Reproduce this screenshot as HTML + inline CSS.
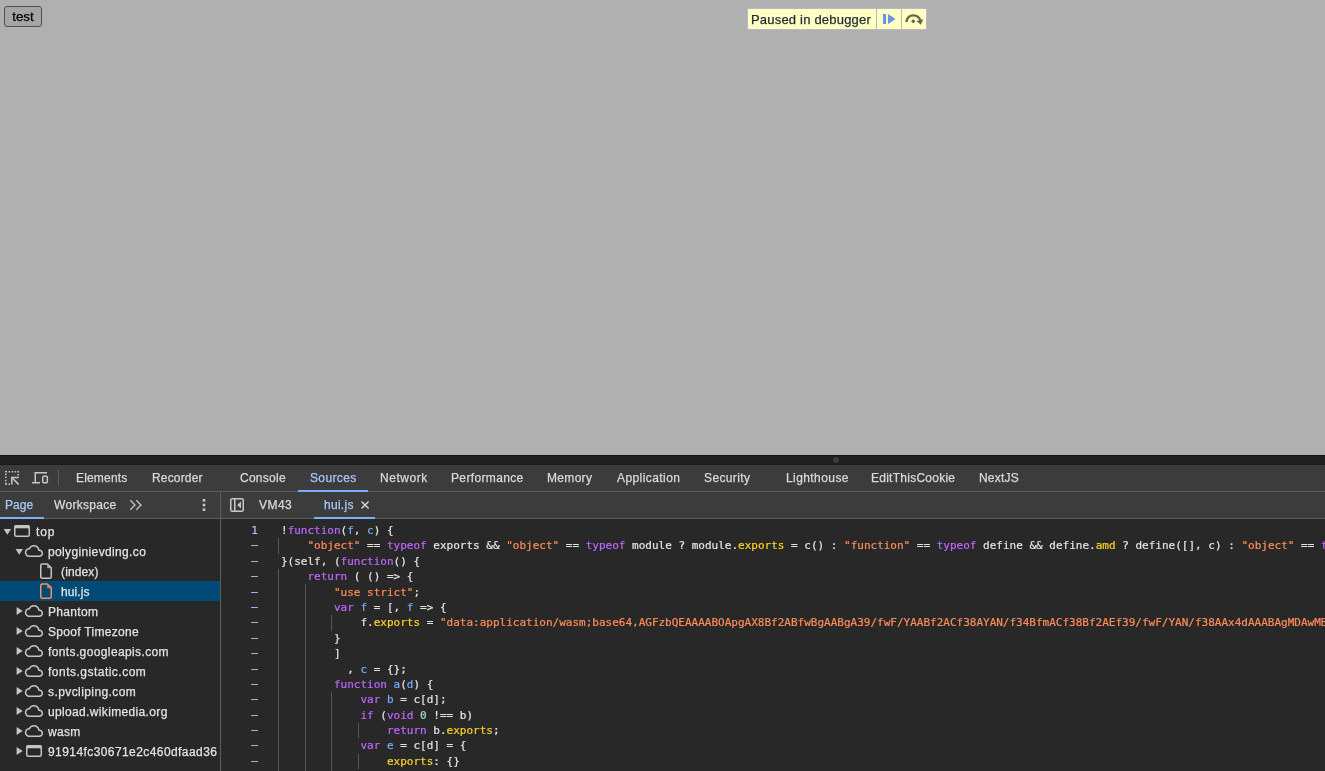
<!DOCTYPE html>
<html lang="en"><head><meta charset="utf-8"><title>test</title>
<style>

html,body{margin:0;padding:0}
body{width:1325px;height:771px;overflow:hidden;background:#b0b0b0;position:relative;font-family:"Liberation Sans", "DejaVu Sans", sans-serif;}
.abs{position:absolute}
.lab,#code,#gut,#btn,#paused .t{will-change:transform}
#code,#gut{-webkit-text-stroke:0.2px}
.lab,#paused .t{-webkit-text-stroke:0.25px}
.lab{position:absolute;height:20px;line-height:20px;white-space:nowrap;font-family:"Liberation Sans", "DejaVu Sans", sans-serif;}
#btn{position:absolute;left:4px;top:6px;width:38px;height:21px;box-sizing:border-box;border:1px solid #505050;border-radius:3px;-webkit-text-stroke:0.25px;background:#a5a5a5;color:#000;font:13.33px "Liberation Sans", "DejaVu Sans", sans-serif;line-height:19px;text-align:center}
#paused{position:absolute;left:747px;top:8px;width:180px;height:22px;box-sizing:border-box;background:#ffffc2;border:1px solid #b9b9cc;}
#paused .t{position:absolute;left:3px;top:1px;letter-spacing:0.2px;height:20px;line-height:20px;font-size:13px;color:#1f2a3a;white-space:nowrap}
#paused .sep{position:absolute;top:0;width:1px;height:20px;background:#b9b9cc}
#strip{position:absolute;left:0;top:455px;width:1325px;height:10px;background:#202020;border-top:1px solid #131313;border-bottom:1px solid #1a1a1a;box-sizing:border-box}
#dot{position:absolute;left:833.3px;top:457px;width:6px;height:6px;border-radius:50%;background:#3b3b3b}
#bar1{position:absolute;left:0;top:465px;width:1325px;height:26px;background:#3c3c3c}
#bar1b{position:absolute;left:0;top:491px;width:1325px;height:1px;background:#5c5c5c}
#bar2{position:absolute;left:0;top:492px;width:1325px;height:26px;background:#3c3c3c}
#bar2b{position:absolute;left:0;top:518px;width:1325px;height:1px;background:#5c5c5c}
#main{position:absolute;left:0;top:519px;width:1325px;height:252px;background:#282828;overflow:hidden}
#vsep{position:absolute;left:220px;top:492px;width:1px;height:279px;background:#5c5c5c}
.ul{position:absolute;height:2px;background:#7cb0ff}
#sel{position:absolute;left:0;top:581px;width:220px;height:20px;background:#004a77}
svg{position:absolute;overflow:visible}
#code{position:absolute;left:281px;top:0;white-space:pre;font-family:"DejaVu Sans Mono", "Liberation Mono", monospace;font-size:11px;line-height:15.4px;color:#e3e3e3;}
#code div{height:15.4px}
#gut{position:absolute;left:221px;top:0;width:36.8px;text-align:right;white-space:pre;font-family:"DejaVu Sans Mono", "Liberation Mono", monospace;font-size:11px;line-height:15.4px;color:#a8c7fa}
#gut div{height:15.4px}
#gut .da{position:relative;top:-1px}
.k{color:#bf67ff}.s{color:#fe8d59}.p{color:#fcd224}.d{color:#7cacf8}.n{color:#a8dab5}
.g{position:absolute;width:1px;background:#565656}
#codewrap{position:absolute;left:0;top:3.8px;width:1325px;height:260px}

</style></head><body>
<div id="btn">test</div>
<div id="paused"><span class="t" id="pausedt">Paused in debugger</span><span class="sep" style="left:128px"></span><span class="sep" style="left:153px"></span><svg style="left:-1px;top:-1px" width="180" height="22" viewBox="747 8 180 22"><rect x="883" y="14" width="3" height="10" fill="#6495ed"/><path d="M888 14 L895.6 19 L888 24 Z" fill="#6495ed"/><path d="M906.4 22.2 C907 17.6 910 15.4 913.3 15.4 C916.8 15.4 919.5 17.5 920.5 20.8" fill="none" stroke="#66664d" stroke-width="2.2"/><path d="M916.4 20.9 L923.1 19.3 L920.9 24.8 Z" fill="#66664d"/><circle cx="913.2" cy="21.2" r="1.7" fill="#66664d"/></svg></div>
<div id="strip"></div><div id="dot"></div>
<div id="bar1"></div><div id="bar1b"></div><div id="bar2"></div><div id="bar2b"></div>
<div id="main"></div>
<svg style="left:0;top:465px" width="70" height="26" viewBox="0 465 70 26">
<g fill="none" stroke="#c7c7c7" stroke-width="1.5">
<path d="M5.75 484.2 V471.75 H18.2" stroke-dasharray="1.5 1.55"/>
<path d="M18.25 471 V475.5" stroke-dasharray="1.5 1.5"/>
<path d="M5 484.25 H10" stroke-dasharray="1.5 1.5" stroke-dashoffset="-0.5"/>
<path d="M11.8 484.5 V477.6 H18.8"/>
<path d="M12.2 478 L18.6 484.4"/>
</g>
<g fill="none" stroke="#c7c7c7" stroke-width="1.5">
<path d="M47 472.75 H35.25 V482"/>
<path d="M32 482.75 H40"/>
<rect x="42.75" y="476.25" width="4.6" height="6.5" rx="1"/>
</g>
<rect x="58" y="470" width="1" height="16" fill="#5c5c5c"/>
</svg>
<span class="lab" id="t_el" style="left:76px;top:468px;color:#dadada;font-size:12px;letter-spacing:0.174px;">Elements</span>
<span class="lab" id="t_rec" style="left:152px;top:468px;color:#dadada;font-size:12px;letter-spacing:0.168px;">Recorder</span>
<span class="lab" id="t_con" style="left:240px;top:468px;color:#dadada;font-size:12px;letter-spacing:0.266px;">Console</span>
<span class="lab" id="t_src" style="left:310px;top:468px;color:#a8c7fa;font-size:12px;letter-spacing:0.365px;">Sources</span>
<span class="lab" id="t_net" style="left:380px;top:468px;color:#dadada;font-size:12px;letter-spacing:0.536px;">Network</span>
<span class="lab" id="t_perf" style="left:451px;top:468px;color:#dadada;font-size:12px;letter-spacing:0.36px;">Performance</span>
<span class="lab" id="t_mem" style="left:547px;top:468px;color:#dadada;font-size:12px;letter-spacing:0.32px;">Memory</span>
<span class="lab" id="t_app" style="left:617px;top:468px;color:#dadada;font-size:12px;letter-spacing:0.42px;">Application</span>
<span class="lab" id="t_sec" style="left:704px;top:468px;color:#dadada;font-size:12px;letter-spacing:0.372px;">Security</span>
<span class="lab" id="t_lh" style="left:786px;top:468px;color:#dadada;font-size:12px;letter-spacing:0.418px;">Lighthouse</span>
<span class="lab" id="t_etc" style="left:871px;top:468px;color:#dadada;font-size:12px;letter-spacing:0.257px;">EditThisCookie</span>
<span class="lab" id="t_nx" style="left:979px;top:468px;color:#dadada;font-size:12px;letter-spacing:0.2px;">NextJS</span>
<div class="ul" style="left:298px;top:490px;width:70px"></div>
<span class="lab" id="s_page" style="left:5px;top:495px;color:#a8c7fa;font-size:12px;letter-spacing:0.07px;">Page</span>
<span class="lab" id="s_ws" style="left:54px;top:495px;color:#dadada;font-size:12px;letter-spacing:0.3px;">Workspace</span>
<div class="ul" style="left:0;top:517px;width:44px"></div>
<svg style="left:120px;top:492px" width="130" height="26" viewBox="120 492 130 26">
<g fill="none" stroke="#c7c7c7" stroke-width="1.3">
<path d="M130.3 500.3 L135 505 L130.3 509.7"/><path d="M136.3 500.3 L141 505 L136.3 509.7"/>
<rect x="230.75" y="498.75" width="12.5" height="12.5" rx="1.6" stroke-width="1.5"/>
<path d="M234.75 499 V511" stroke-width="1.5"/>
</g>
<path d="M241 501.6 V508.6 L237.2 505.1 Z" fill="#c7c7c7"/>
<rect x="202.7" y="499" width="2.6" height="2.6" fill="#c7c7c7"/><rect x="202.7" y="503.7" width="2.6" height="2.6" fill="#c7c7c7"/><rect x="202.7" y="508.4" width="2.6" height="2.6" fill="#c7c7c7"/>
</svg>
<span class="lab" id="f_vm" style="left:259px;top:495px;color:#dadada;font-size:12px;letter-spacing:0.469px;">VM43</span>
<span class="lab" id="f_hui" style="left:324px;top:495px;color:#a8c7fa;font-size:12px;letter-spacing:0.28px;">hui.js</span>
<svg style="left:358px;top:498px" width="14" height="14" viewBox="358 498 14 14"><path d="M361.5 501.5 L368.6 508.6 M368.6 501.5 L361.5 508.6" stroke="#dadada" stroke-width="1.4" fill="none"/></svg>
<div class="ul" style="left:314px;top:517px;width:61px"></div>
<div id="sel"></div>
<svg style="left:0;top:519px" width="220" height="252" viewBox="0 519 220 252"><path d="M3.6 528.9 h7.5 l-3.75 5.9 Z" fill="#c4c4c4"/><rect x="14.75" y="525.75" width="14.5" height="10.5" rx="1.5" fill="none" stroke="#c4c4c4" stroke-width="1.5"/><rect x="14.5" y="525.4" width="15" height="2.9" fill="#c4c4c4"/><path d="M15.5 548.9 h7.5 l-3.75 5.9 Z" fill="#c4c4c4"/><path transform="translate(24.8 541.85) scale(0.7625)" d="M12 6c2.62 0 4.88 1.86 5.39 4.43l.3 1.5 1.53.11c1.56.1 2.78 1.41 2.78 2.96 0 1.65-1.35 3-3 3H6c-2.21 0-4-1.79-4-4 0-2.05 1.53-3.76 3.56-3.97l1.07-.11.5-.95C8.08 7.14 9.94 6 12 6m0-2C9.11 4 6.6 5.64 5.35 8.04 2.34 8.36 0 10.91 0 14c0 3.31 2.69 6 6 6h13c2.76 0 5-2.24 5-5 0-2.64-2.05-4.78-4.65-4.96C18.67 6.59 15.64 4 12 4z" fill="#c4c4c4"/><path d="M42.25 563.95 H47.35 L51.25 567.85 V576.6500000000001 a1.5 1.5 0 0 1 -1.5 1.5 H42.25 a1.5 1.5 0 0 1 -1.5 -1.5 V565.45 a1.5 1.5 0 0 1 1.5 -1.5 Z" fill="none" stroke="#c4c4c4" stroke-width="1.5" stroke-linejoin="round"/><path d="M47.15 564.1500000000001 V568.1500000000001 H51.15 Z" fill="#c4c4c4" opacity="0.75"/><path d="M42.25 583.95 H47.35 L51.25 587.85 V596.6500000000001 a1.5 1.5 0 0 1 -1.5 1.5 H42.25 a1.5 1.5 0 0 1 -1.5 -1.5 V585.45 a1.5 1.5 0 0 1 1.5 -1.5 Z" fill="none" stroke="#fe8d59" stroke-width="1.5" stroke-linejoin="round"/><path d="M47.15 584.1500000000001 V588.1500000000001 H51.15 Z" fill="#fe8d59" opacity="0.75"/><path d="M16.6 606.9 v8.2 l6.1 -4.1 Z" fill="#c4c4c4"/><path transform="translate(24.8 601.85) scale(0.7625)" d="M12 6c2.62 0 4.88 1.86 5.39 4.43l.3 1.5 1.53.11c1.56.1 2.78 1.41 2.78 2.96 0 1.65-1.35 3-3 3H6c-2.21 0-4-1.79-4-4 0-2.05 1.53-3.76 3.56-3.97l1.07-.11.5-.95C8.08 7.14 9.94 6 12 6m0-2C9.11 4 6.6 5.64 5.35 8.04 2.34 8.36 0 10.91 0 14c0 3.31 2.69 6 6 6h13c2.76 0 5-2.24 5-5 0-2.64-2.05-4.78-4.65-4.96C18.67 6.59 15.64 4 12 4z" fill="#c4c4c4"/><path d="M16.6 626.9 v8.2 l6.1 -4.1 Z" fill="#c4c4c4"/><path transform="translate(24.8 621.85) scale(0.7625)" d="M12 6c2.62 0 4.88 1.86 5.39 4.43l.3 1.5 1.53.11c1.56.1 2.78 1.41 2.78 2.96 0 1.65-1.35 3-3 3H6c-2.21 0-4-1.79-4-4 0-2.05 1.53-3.76 3.56-3.97l1.07-.11.5-.95C8.08 7.14 9.94 6 12 6m0-2C9.11 4 6.6 5.64 5.35 8.04 2.34 8.36 0 10.91 0 14c0 3.31 2.69 6 6 6h13c2.76 0 5-2.24 5-5 0-2.64-2.05-4.78-4.65-4.96C18.67 6.59 15.64 4 12 4z" fill="#c4c4c4"/><path d="M16.6 646.9 v8.2 l6.1 -4.1 Z" fill="#c4c4c4"/><path transform="translate(24.8 641.85) scale(0.7625)" d="M12 6c2.62 0 4.88 1.86 5.39 4.43l.3 1.5 1.53.11c1.56.1 2.78 1.41 2.78 2.96 0 1.65-1.35 3-3 3H6c-2.21 0-4-1.79-4-4 0-2.05 1.53-3.76 3.56-3.97l1.07-.11.5-.95C8.08 7.14 9.94 6 12 6m0-2C9.11 4 6.6 5.64 5.35 8.04 2.34 8.36 0 10.91 0 14c0 3.31 2.69 6 6 6h13c2.76 0 5-2.24 5-5 0-2.64-2.05-4.78-4.65-4.96C18.67 6.59 15.64 4 12 4z" fill="#c4c4c4"/><path d="M16.6 666.9 v8.2 l6.1 -4.1 Z" fill="#c4c4c4"/><path transform="translate(24.8 661.85) scale(0.7625)" d="M12 6c2.62 0 4.88 1.86 5.39 4.43l.3 1.5 1.53.11c1.56.1 2.78 1.41 2.78 2.96 0 1.65-1.35 3-3 3H6c-2.21 0-4-1.79-4-4 0-2.05 1.53-3.76 3.56-3.97l1.07-.11.5-.95C8.08 7.14 9.94 6 12 6m0-2C9.11 4 6.6 5.64 5.35 8.04 2.34 8.36 0 10.91 0 14c0 3.31 2.69 6 6 6h13c2.76 0 5-2.24 5-5 0-2.64-2.05-4.78-4.65-4.96C18.67 6.59 15.64 4 12 4z" fill="#c4c4c4"/><path d="M16.6 686.9 v8.2 l6.1 -4.1 Z" fill="#c4c4c4"/><path transform="translate(24.8 681.85) scale(0.7625)" d="M12 6c2.62 0 4.88 1.86 5.39 4.43l.3 1.5 1.53.11c1.56.1 2.78 1.41 2.78 2.96 0 1.65-1.35 3-3 3H6c-2.21 0-4-1.79-4-4 0-2.05 1.53-3.76 3.56-3.97l1.07-.11.5-.95C8.08 7.14 9.94 6 12 6m0-2C9.11 4 6.6 5.64 5.35 8.04 2.34 8.36 0 10.91 0 14c0 3.31 2.69 6 6 6h13c2.76 0 5-2.24 5-5 0-2.64-2.05-4.78-4.65-4.96C18.67 6.59 15.64 4 12 4z" fill="#c4c4c4"/><path d="M16.6 706.9 v8.2 l6.1 -4.1 Z" fill="#c4c4c4"/><path transform="translate(24.8 701.85) scale(0.7625)" d="M12 6c2.62 0 4.88 1.86 5.39 4.43l.3 1.5 1.53.11c1.56.1 2.78 1.41 2.78 2.96 0 1.65-1.35 3-3 3H6c-2.21 0-4-1.79-4-4 0-2.05 1.53-3.76 3.56-3.97l1.07-.11.5-.95C8.08 7.14 9.94 6 12 6m0-2C9.11 4 6.6 5.64 5.35 8.04 2.34 8.36 0 10.91 0 14c0 3.31 2.69 6 6 6h13c2.76 0 5-2.24 5-5 0-2.64-2.05-4.78-4.65-4.96C18.67 6.59 15.64 4 12 4z" fill="#c4c4c4"/><path d="M16.6 726.9 v8.2 l6.1 -4.1 Z" fill="#c4c4c4"/><path transform="translate(24.8 721.85) scale(0.7625)" d="M12 6c2.62 0 4.88 1.86 5.39 4.43l.3 1.5 1.53.11c1.56.1 2.78 1.41 2.78 2.96 0 1.65-1.35 3-3 3H6c-2.21 0-4-1.79-4-4 0-2.05 1.53-3.76 3.56-3.97l1.07-.11.5-.95C8.08 7.14 9.94 6 12 6m0-2C9.11 4 6.6 5.64 5.35 8.04 2.34 8.36 0 10.91 0 14c0 3.31 2.69 6 6 6h13c2.76 0 5-2.24 5-5 0-2.64-2.05-4.78-4.65-4.96C18.67 6.59 15.64 4 12 4z" fill="#c4c4c4"/><path d="M16.6 746.9 v8.2 l6.1 -4.1 Z" fill="#c4c4c4"/><rect x="26.75" y="745.75" width="14.5" height="10.5" rx="1.5" fill="none" stroke="#c4c4c4" stroke-width="1.5"/><rect x="26.5" y="745.4" width="15" height="2.9" fill="#c4c4c4"/></svg>
<span class="lab" id="r0" style="left:36px;top:522px;color:#e3e3e3;font-size:12px;letter-spacing:0.9px;">top</span>
<span class="lab" id="r1" style="left:48px;top:542px;color:#e3e3e3;font-size:12px;letter-spacing:0.362px;">polyginievding.co</span>
<span class="lab" id="r2" style="left:61px;top:562px;color:#e3e3e3;font-size:12px;letter-spacing:0.133px;">(index)</span>
<span class="lab" id="r3" style="left:61px;top:582px;color:#e3e3e3;font-size:12px;letter-spacing:0.12px;">hui.js</span>
<span class="lab" id="r4" style="left:48px;top:602px;color:#e3e3e3;font-size:12px;letter-spacing:0.334px;">Phantom</span>
<span class="lab" id="r5" style="left:48px;top:622px;color:#e3e3e3;font-size:12px;letter-spacing:0.308px;">Spoof Timezone</span>
<span class="lab" id="r6" style="left:48px;top:642px;color:#e3e3e3;font-size:12px;letter-spacing:0.379px;">fonts.googleapis.com</span>
<span class="lab" id="r7" style="left:48px;top:662px;color:#e3e3e3;font-size:12px;letter-spacing:0.486px;">fonts.gstatic.com</span>
<span class="lab" id="r8" style="left:48px;top:682px;color:#e3e3e3;font-size:12px;letter-spacing:0.413px;">s.pvcliping.com</span>
<span class="lab" id="r9" style="left:48px;top:702px;color:#e3e3e3;font-size:12px;letter-spacing:0.347px;">upload.wikimedia.org</span>
<span class="lab" id="r10" style="left:48px;top:722px;color:#e3e3e3;font-size:12px;letter-spacing:0.301px;">wasm</span>
<span class="lab" id="r11" style="left:48px;top:742px;color:#e3e3e3;font-size:12px;letter-spacing:0.42px;max-width:171px;overflow:hidden;">91914fc30671e2c460dfaad36</span>
<div id="vsep"></div>
<div class="abs" style="left:221px;top:519px;width:1104px;height:252px;overflow:hidden"><div id="codewrap" style="left:-221px">
<div id="gut"><div>1</div><div class="da">–</div><div class="da">–</div><div class="da">–</div><div class="da">–</div><div class="da">–</div><div class="da">–</div><div class="da">–</div><div class="da">–</div><div class="da">–</div><div class="da">–</div><div class="da">–</div><div class="da">–</div><div class="da">–</div><div class="da">–</div><div class="da">–</div><div class="da">–</div></div>
<div class="g" style="left:278.0px;top:15.4px;height:15.4px"></div>
<div class="g" style="left:278.0px;top:46.2px;height:15.4px"></div>
<div class="g" style="left:278.0px;top:61.6px;height:15.4px"></div>
<div class="g" style="left:304.5px;top:61.6px;height:15.4px"></div>
<div class="g" style="left:278.0px;top:77.0px;height:15.4px"></div>
<div class="g" style="left:304.5px;top:77.0px;height:15.4px"></div>
<div class="g" style="left:278.0px;top:92.4px;height:15.4px"></div>
<div class="g" style="left:304.5px;top:92.4px;height:15.4px"></div>
<div class="g" style="left:331.0px;top:92.4px;height:15.4px"></div>
<div class="g" style="left:278.0px;top:107.8px;height:15.4px"></div>
<div class="g" style="left:304.5px;top:107.8px;height:15.4px"></div>
<div class="g" style="left:278.0px;top:123.2px;height:15.4px"></div>
<div class="g" style="left:304.5px;top:123.2px;height:15.4px"></div>
<div class="g" style="left:278.0px;top:138.6px;height:15.4px"></div>
<div class="g" style="left:304.5px;top:138.6px;height:15.4px"></div>
<div class="g" style="left:278.0px;top:154.0px;height:15.4px"></div>
<div class="g" style="left:304.5px;top:154.0px;height:15.4px"></div>
<div class="g" style="left:278.0px;top:169.4px;height:15.4px"></div>
<div class="g" style="left:304.5px;top:169.4px;height:15.4px"></div>
<div class="g" style="left:331.0px;top:169.4px;height:15.4px"></div>
<div class="g" style="left:278.0px;top:184.8px;height:15.4px"></div>
<div class="g" style="left:304.5px;top:184.8px;height:15.4px"></div>
<div class="g" style="left:331.0px;top:184.8px;height:15.4px"></div>
<div class="g" style="left:278.0px;top:200.2px;height:15.4px"></div>
<div class="g" style="left:304.5px;top:200.2px;height:15.4px"></div>
<div class="g" style="left:331.0px;top:200.2px;height:15.4px"></div>
<div class="g" style="left:357.5px;top:200.2px;height:15.4px"></div>
<div class="g" style="left:278.0px;top:215.6px;height:15.4px"></div>
<div class="g" style="left:304.5px;top:215.6px;height:15.4px"></div>
<div class="g" style="left:331.0px;top:215.6px;height:15.4px"></div>
<div class="g" style="left:278.0px;top:231.0px;height:15.4px"></div>
<div class="g" style="left:304.5px;top:231.0px;height:15.4px"></div>
<div class="g" style="left:331.0px;top:231.0px;height:15.4px"></div>
<div class="g" style="left:357.5px;top:231.0px;height:15.4px"></div>
<div class="g" style="left:278.0px;top:246.4px;height:15.4px"></div>
<div class="g" style="left:304.5px;top:246.4px;height:15.4px"></div>
<div class="g" style="left:331.0px;top:246.4px;height:15.4px"></div>
<div id="code"><div>!<span class="k">function</span>(<span class="d">f</span>, <span class="d">c</span>) {</div><div>    <span class="s">&quot;object&quot;</span> == <span class="k">typeof</span> exports &amp;&amp; <span class="s">&quot;object&quot;</span> == <span class="k">typeof</span> module ? module.<span class="p">exports</span> = c() : <span class="s">&quot;function&quot;</span> == <span class="k">typeof</span> define &amp;&amp; define.<span class="p">amd</span> ? define([], c) : <span class="s">&quot;object&quot;</span> == <span class="k">typeof</span> exports ? exports.<span class="p">hui</span> = c() : f.<span class="p">hui</span> = c()</div><div>}(self, (<span class="k">function</span>() {</div><div>    <span class="k">return</span> ( () =&gt; {</div><div>        <span class="s">&quot;use strict&quot;</span>;</div><div>        <span class="k">var</span> <span class="d">f</span> = [, <span class="d">f</span> =&gt; {</div><div>            f.<span class="p">exports</span> = <span class="s">&quot;data:application/wasm;base64,AGFzbQEAAAABOApgAX8Bf2ABfwBgAABgA39/fwF/YAABf2ACf38AYAN/f34BfmACf38Bf2AEf39/fwF/YAN/f38AAx4dAAABAgMDAwMBAgQFBgcICQ</span></div><div>        }</div><div>        ]</div><div>          , <span class="d">c</span> = {};</div><div>        <span class="k">function</span> <span class="d">a</span>(<span class="d">d</span>) {</div><div>            <span class="k">var</span> <span class="d">b</span> = c[d];</div><div>            <span class="k">if</span> (<span class="k">void</span> <span class="n">0</span> !== b)</div><div>                <span class="k">return</span> b.<span class="p">exports</span>;</div><div>            <span class="k">var</span> <span class="d">e</span> = c[d] = {</div><div>                <span class="p">exports</span>: {}</div><div>            };</div></div>
</div></div>
</body></html>
